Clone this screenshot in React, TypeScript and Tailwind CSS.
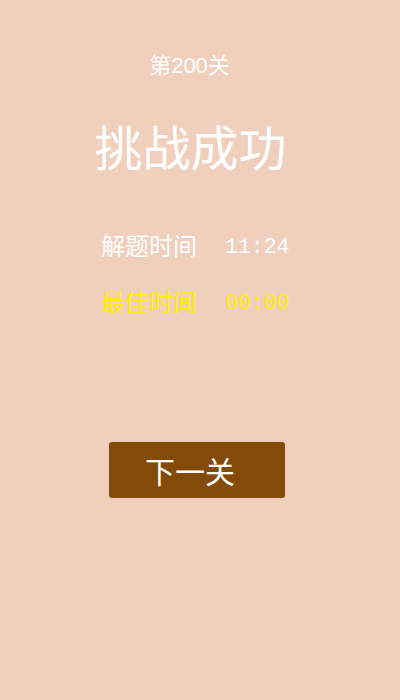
import React from "react";

const cjk = { fontFamily: '"Noto Sans CJK SC", "Liberation Sans", sans-serif' };
const mono = { fontFamily: '"Liberation Mono", "Noto Sans CJK SC", monospace' };

export default function App() {
  return (
    <div className="w-[400px] h-[700px] bg-[#f0cfbd] overflow-hidden" style={cjk}>
      <div className="pt-[52px] pr-[21px] text-center text-white text-[22px] leading-[22px]">
        第<span style={{ fontFamily: '"Liberation Sans", sans-serif' }}>200</span>关
      </div>
      <div className="mt-[44px] pr-[19px] text-center text-white text-[48px] leading-[48px]">
        挑战成功
      </div>
      <div className="mt-[64px] flex items-center pl-[101px] text-white h-[24px]">
        <span className="w-[96px] text-[24px] leading-[24px]">解题时间</span>
        <span className="ml-[28px] mt-[3px] text-[21.5px] leading-[24px]" style={mono}>11:24</span>
      </div>
      <div className="mt-[32px] flex items-center pl-[101px] text-[#fff000] h-[24px]">
        <span className="w-[96px] text-[24px] leading-[24px]">最佳时间</span>
        <span className="ml-[28px] mt-[3px] text-[21.5px] leading-[24px]" style={mono}>00:00</span>
      </div>
      <div className="mt-[129px] ml-[109px] w-[176px] h-[56px] rounded-[3px] bg-[#834a09] flex items-center pl-[36px] text-white text-[30px] leading-[30px]">
        下一关
      </div>
    </div>
  );
}
